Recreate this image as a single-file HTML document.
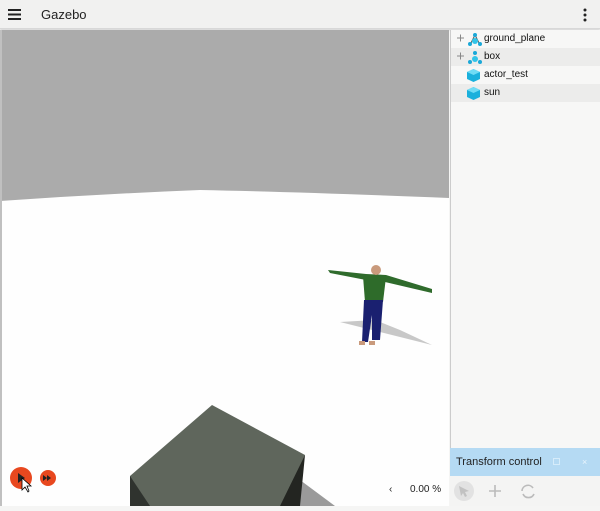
<!DOCTYPE html>
<html><head><meta charset="utf-8"><style>
*{margin:0;padding:0;box-sizing:border-box}
body{width:600px;height:506px;overflow:hidden;background:#f5f5f4;font-family:"Liberation Sans","DejaVu Sans",sans-serif;position:relative}
.top{position:absolute;left:0;top:0;width:600px;height:29px;background:#f1f1f0;border-bottom:1px solid #d8d8d8;box-shadow:0 1px 2px rgba(0,0,0,.15)}
.top .t{position:absolute;left:41px;top:7px;font-size:13px;color:#222}
.vp{position:absolute;left:0;top:30px;width:449px;height:476px}
.panel{position:absolute;left:450px;top:30px;width:150px;height:418px;background:#f7f7f6;border-left:1px solid #ccc}
.row{height:18px;font-size:10px;color:#111;line-height:18px;position:relative}
.row:nth-child(even){background:#ececeb}
.row span{position:absolute;left:33px}
.tc{position:absolute;left:450px;top:448px;width:150px;height:28px;background:#b5daf3;font-size:11px;color:#222;line-height:28px;padding-left:6px}
.tb{position:absolute;left:450px;top:476px;width:150px;height:30px;background:#f4f4f3}
</style></head><body>
<div class="top">
<svg style="position:absolute;left:8px;top:9px" width="13" height="11"><rect y="0" width="13" height="2" fill="#222"/><rect y="4.5" width="13" height="2" fill="#222"/><rect y="9" width="13" height="2" fill="#222"/></svg>
<div class="t">Gazebo</div>
<svg style="position:absolute;left:583px;top:8px" width="4" height="14"><circle cx="2" cy="2" r="1.5" fill="#222"/><circle cx="2" cy="7" r="1.5" fill="#222"/><circle cx="2" cy="12" r="1.5" fill="#222"/></svg>
</div>
<svg class="vp" width="449" height="476" viewBox="0 30 449 476">
<rect x="0" y="30" width="449" height="476" fill="#fefefe"/>
<path d="M0 30H449V198Q300 192 200 190Q100 194 0 201Z" fill="#ababab"/>
<rect x="0" y="30" width="2" height="476" fill="#c0c0c0"/>
<polygon points="300,480 335,506 300,506" fill="#9a9a9a"/>
<polygon points="130,476 212,405 305,455 290,506 130,506" fill="#5f665c"/>
<polygon points="130,476 150,506 130,506" fill="#2f332e"/>
<polygon points="305,455 300,506 280,506" fill="#232521"/>
<polygon points="340,322 432,345 400,330 375,320" fill="#c8c8c8"/>
<path d="M328 270 L366 274 L386 275 L432 289 L432 293 L385 282 L366 280 L330 273Z" fill="#2f6b2c"/>
<path d="M363 276 L386 277 L383 302 L365 302Z" fill="#2e6b2a"/>
<circle cx="376" cy="270" r="5" fill="#c99a7c"/>
<path d="M364 300 L383 300 L380 340 L372 340 L372 315 L368 342 L362 342Z" fill="#1a2070"/>
<rect x="359" y="341" width="6" height="4" fill="#c99a7c"/><rect x="369" y="341" width="6" height="4" fill="#c99a7c"/>
<circle cx="21" cy="478" r="11" fill="#e8481f"/>
<polygon points="18,473 25,478 18,483" fill="#222"/>
<path d="M22 478 L22 490 L25 487 L28 492 L29 491 L27 486 L31 486Z" fill="#fff" stroke="#000" stroke-width=".8"/>
<circle cx="48" cy="478" r="8" fill="#e8481f"/>
<polygon points="43,475 47,478 43,481" fill="#222"/><polygon points="47,475 51,478 47,481" fill="#222"/>
<text x="389" y="492" font-size="10" fill="#222" font-family="Liberation Sans">‹</text>
<text x="410" y="492" font-size="10" fill="#222" font-family="Liberation Sans">0.00 %</text>
</svg>
<div class="panel">
<div class="row"><svg style="position:absolute;left:5px;top:2px" width="28" height="15"><path d="M1 6H8M4.5 2.5V9.5" stroke="#888"/><path d="M19 3L15 11M19 3L23 11" stroke="#555"/><circle cx="19" cy="3" r="2" fill="#1aa8d8"/><circle cx="19" cy="9" r="3" fill="#33c4e8"/><circle cx="14" cy="12" r="2" fill="#1aa8d8"/><circle cx="24" cy="12" r="2" fill="#1aa8d8"/></svg><span>ground_plane</span></div>
<div class="row"><svg style="position:absolute;left:5px;top:2px" width="28" height="15"><path d="M1 6H8M4.5 2.5V9.5" stroke="#888"/><circle cx="19" cy="3" r="2" fill="#1aa8d8"/><circle cx="19" cy="9" r="3" fill="#33c4e8"/><circle cx="14" cy="12" r="2" fill="#1aa8d8"/><circle cx="24" cy="12" r="2" fill="#1aa8d8"/></svg><span>box</span></div>
<div class="row"><svg style="position:absolute;left:16px;top:3px" width="13" height="13"><polygon points="6.5,0 13,3 13,10 6.5,13 0,10 0,3" fill="#1ab0dc"/><polygon points="6.5,0 13,3 6.5,6 0,3" fill="#6fdcf5"/></svg><span>actor_test</span></div>
<div class="row"><svg style="position:absolute;left:16px;top:3px" width="13" height="13"><polygon points="6.5,0 13,3 13,10 6.5,13 0,10 0,3" fill="#1ab0dc"/><polygon points="6.5,0 13,3 6.5,6 0,3" fill="#6fdcf5"/></svg><span>sun</span></div>
</div>
<div class="tc">Transform control<span style="position:absolute;left:103px;top:10px;width:7px;height:7px;border:1px solid #d6ecfa"></span><span style="position:absolute;left:132px;color:#e8f4fc;font-size:9px">×</span></div>
<div class="tb"><svg width="150" height="30"><circle cx="14" cy="15" r="10" fill="#e2e2e2"/><polygon points="9,10 19,15 15,16 17,20 15,21 13,17 11,20" fill="#c2c2c2"/><path d="M45 9V21M39 15H51" stroke="#bbb" stroke-width="1.6"/><path d="M72 15A6 6 0 0 1 83 12M84 18A6 6 0 0 1 73 18" stroke="#bbb" stroke-width="1.6" fill="none"/></svg></div>
</body></html>
